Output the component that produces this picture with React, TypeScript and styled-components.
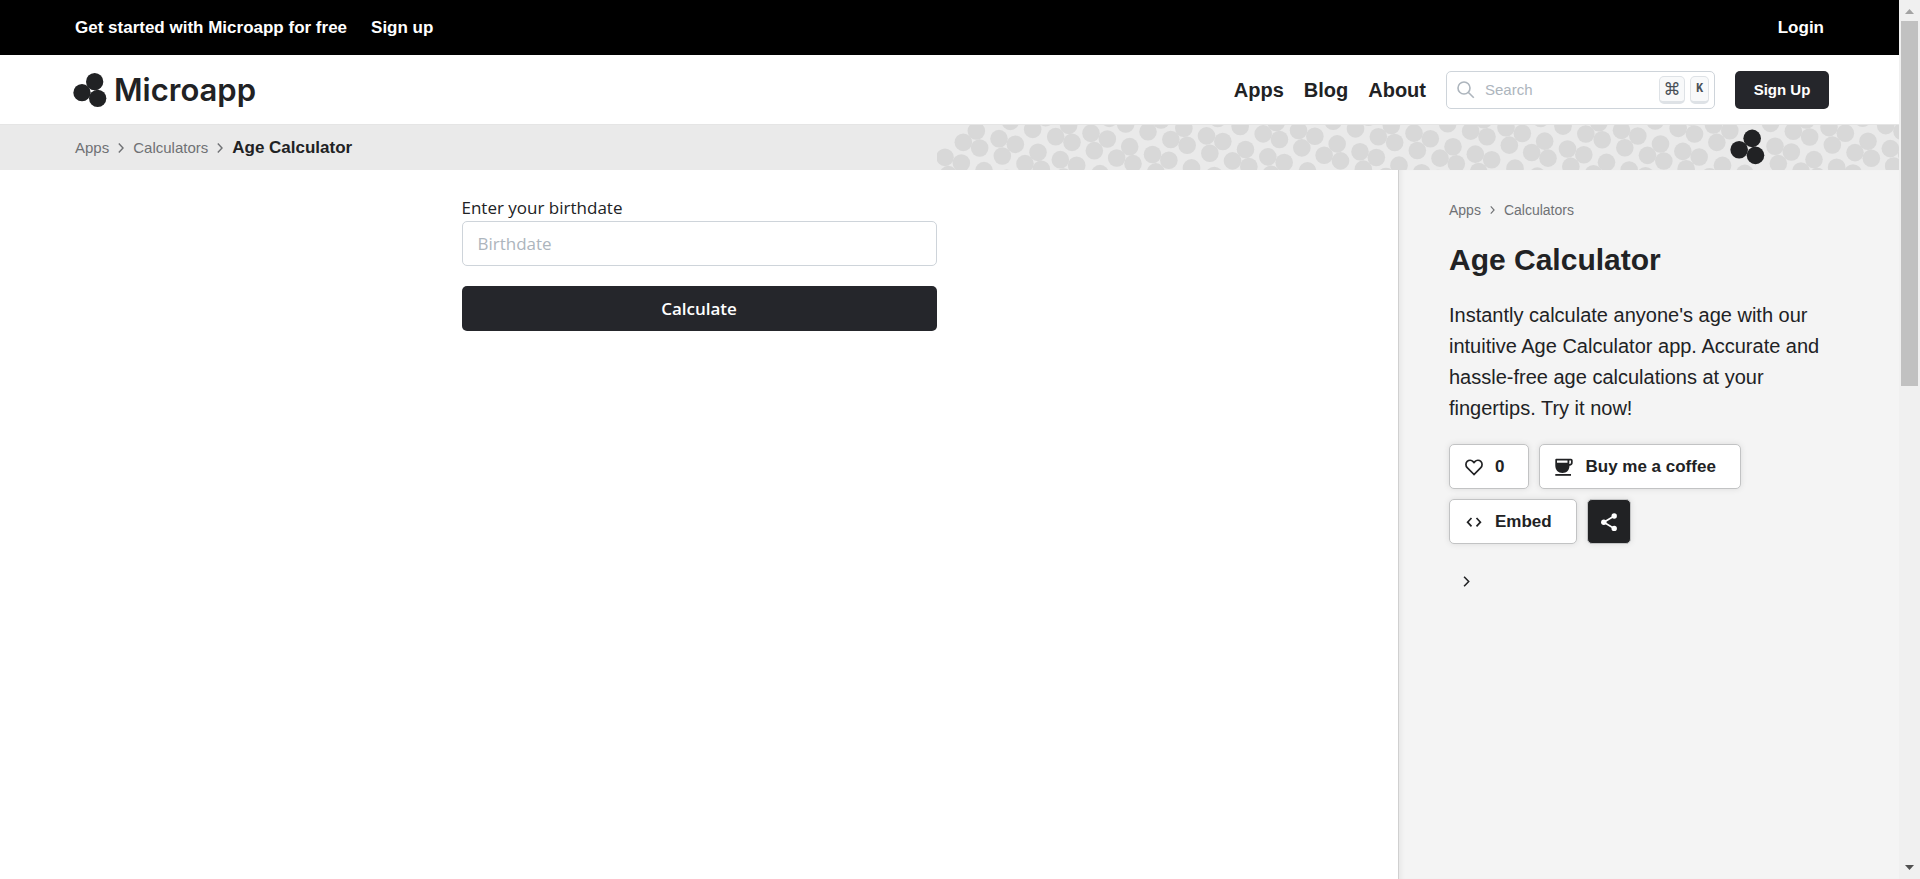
import React from 'react';
import styled, { createGlobalStyle } from 'styled-components';

const sans = '"Liberation Sans", Arial, sans-serif';
const ui = '"Open Sans", "Noto Sans", sans-serif';
const ink = '#212224';
const dark = '#25262b';

const GlobalStyle = createGlobalStyle`
  *, *::before, *::after { box-sizing: border-box; }
  body { margin: 0; background: #fff; color: ${ink}; font-family: ${sans}; }
  a { color: inherit; text-decoration: none; }
  button { font: inherit; cursor: pointer; }
  svg { display: block; flex: none; }
`;

const Shell = styled.div`
  display: grid;
  grid-template-columns: minmax(0, 1fr) 21px;
  height: 100vh;
  overflow: hidden;
`;

const Page = styled.div`
  display: flex;
  flex-direction: column;
  min-height: 0;
`;

const TopBar = styled.div`
  display: flex;
  align-items: center;
  gap: 24px;
  height: 55px;
  padding: 0 75px;
  background: #000;
  color: #fff;
  font-size: 17px;
  font-weight: 700;
`;

const TopLink = styled.a<{ $end?: boolean }>`
  margin-left: ${(p) => (p.$end ? 'auto' : '0')};
`;

const Header = styled.header`
  display: flex;
  align-items: center;
  justify-content: space-between;
  height: 69px;
  padding: 0 70px 0 73px;
`;

const Brand = styled.a`
  display: flex;
  align-items: center;
  gap: 7px;
  font-family: Inter, sans-serif;
  font-size: 31px;
  line-height: 36px;
  font-weight: 600;
`;

const HeaderTools = styled.div`
  display: flex;
  align-items: center;
  gap: 20px;
`;

const Nav = styled.nav`
  display: flex;
  gap: 20px;
  font-size: 20px;
  line-height: 24px;
  font-weight: 700;
`;

const SearchBox = styled.label`
  display: flex;
  align-items: center;
  width: 269px;
  height: 38px;
  padding: 0 5px 0 10px;
  border: 1px solid #ced4da;
  border-radius: 5px;
  color: #adb5bd;
`;

const SearchInput = styled.input`
  flex: 1;
  min-width: 0;
  padding: 0;
  margin-left: 10px;
  border: 0;
  outline: 0;
  background: transparent;
  font-family: ${sans};
  font-size: 15px;
  &::placeholder { color: #adb5bd; opacity: 1; }
`;

const Key = styled.kbd<{ $wide?: boolean }>`
  display: flex;
  align-items: center;
  justify-content: center;
  width: ${(p) => (p.$wide ? 26 : 19)}px;
  height: 28px;
  margin-left: 5px;
  border: 1px solid #dee2e6;
  border-bottom-width: 3px;
  border-radius: 5px;
  background: #f8f9fa;
  color: #495057;
  font-family: ${(p) => (p.$wide ? '"DejaVu Sans"' : '"Liberation Mono"')}, sans-serif;
  font-size: ${(p) => (p.$wide ? 17 : 12)}px;
  font-weight: ${(p) => (p.$wide ? 400 : 700)};
  line-height: 20px;
`;

const SignUp = styled.button`
  width: 94px;
  height: 38px;
  padding: 0;
  border: 0;
  border-radius: 5px;
  background: ${dark};
  color: #fff;
  font-size: 15px;
  font-weight: 700;
`;

const Hero = styled.div`
  display: flex;
  justify-content: space-between;
  height: 46px;
  padding-left: 75px;
  border-top: 1px solid #e5e5e5;
  background: #eaeaea;
`;

const Crumbs = styled.nav<{ $size: number }>`
  display: flex;
  align-items: center;
  gap: 9px;
  color: #6f7174;
  font-size: ${(p) => p.$size}px;
  line-height: 20px;
`;

const CrumbHere = styled.span`
  color: ${ink};
  font-size: 17px;
  font-weight: 700;
`;

const Body = styled.div`
  display: grid;
  grid-template-columns: minmax(0, 1fr) 501px;
  flex: 1;
`;

const Main = styled.main`
  padding: 24px 20px;
`;

const Form = styled.form`
  display: flex;
  flex-direction: column;
  max-width: 475px;
  margin: 0 auto;
  font-family: ${ui};
  font-size: 17px;
`;

const Label = styled.label`
  line-height: 27px;
  font-weight: 500;
`;

const DateInput = styled.input`
  height: 45px;
  padding: 0 15px;
  border: 1px solid #ced4da;
  border-radius: 5px;
  font: inherit;
  &::placeholder { color: #adb5bd; opacity: 1; }
`;

const Submit = styled.button`
  height: 45px;
  margin-top: 20px;
  border: 0;
  border-radius: 5px;
  background: ${dark};
  color: #fff;
  font-weight: 600;
`;

const Sidebar = styled.aside`
  padding: 30px 50px;
  border-left: 1px solid #d0d0d0;
  background: #f4f4f4;
  box-shadow: inset 5px 0 5px -3px rgba(0, 0, 0, 0.06);
`;

const Title = styled.h1`
  margin: 20px 0;
  font-size: 30px;
  line-height: 40px;
`;

const Blurb = styled.p`
  margin: 0 0 20px;
  font-size: 20px;
  line-height: 31px;
`;

const Actions = styled.div`
  display: flex;
  flex-wrap: wrap;
  gap: 10px;
`;

const Action = styled.button<{ $icon?: boolean }>`
  display: flex;
  align-items: center;
  justify-content: ${(p) => (p.$icon ? 'center' : 'flex-start')};
  gap: 11px;
  height: 45px;
  min-width: 44px;
  padding: ${(p) => (p.$icon ? '0' : '0 24px 0 14px')};
  border: 1px solid #c2c3c4;
  border-radius: 5px;
  background: ${(p) => (p.$icon ? ink : '#fff')};
  color: ${(p) => (p.$icon ? '#fff' : ink)};
  box-shadow: 0 0 6px rgba(0, 0, 0, 0.1);
  font-size: 17px;
  font-weight: 700;
`;

const More = styled.button`
  display: flex;
  margin-top: 32px;
  padding: 0 14px;
  border: 0;
  background: none;
  color: ${ink};
`;

const Track = styled.div`
  display: flex;
  flex-direction: column;
  align-items: center;
  justify-content: space-between;
  background: #f0f0f0;
`;

const Thumb = styled.div`
  width: 17px;
  height: 41.5%;
  margin-bottom: auto;
  background: #c1c1c1;
`;

const Chevron = ({ width = 6, height = 10 }: { width?: number; height?: number }) => (
  <svg width={width} height={height} viewBox="0 0 6 10" fill="none" stroke="currentColor" strokeWidth="1.400" aria-hidden="true">
    <path d="M0.800 0.600L5 5L0.800 9.400" />
  </svg>
);

// Circle offsets, from the first circle, of the two cluster orientations.
const LEFT = [[0, 0], [-39, 34], [10, 51]];
const RIGHT = [[0, 0], [49, 17], [10, 52]];
const leftSeeds = [[169, 48], [192, 167], [354, 112], [446, 31], [629, 95], [261, -32], [540, 176], [607, -24]];
const rightSeeds = [[75, 127], [237, 71], [421, 134], [513, 55], [328, -9], [674, -2], [260, 190], [607, 200]];

const Pattern = () => {
  const draw = (seeds: number[][], shape: number[][], name: string) =>
    [0, 1, 2, 3, 4].flatMap((k) =>
      seeds.map(([sx, sy], i) => {
        const black = name === 'l' && k === 3 && i === 4;
        return (
          <g key={`${name}${k}-${i}`} fill={black ? ink : '#d8d8d8'}>
            {shape.map(([dx, dy], j) => (
              <circle key={j} cx={sx + dx + k * 622.5} cy={sy + dy - k * 8.3} r={26.4} />
            ))}
          </g>
        );
      }),
    );
  return (
    <svg width="962" height="45" viewBox="51 30 2886 135" aria-hidden="true">
      {draw(leftSeeds, LEFT, 'l')}
      {draw(rightSeeds, RIGHT, 'r')}
    </svg>
  );
};

export default function App() {
  return (
    <>
      <GlobalStyle />
      <Shell>
        <Page>
          <TopBar>
            <span>Get started with Microapp for free</span>
            <TopLink href="#signup">Sign up</TopLink>
            <TopLink href="#login" $end>Login</TopLink>
          </TopBar>
          <Header>
            <Brand href="#home">
              <svg width="34" height="34" viewBox="0 0 100 102" fill="currentColor" aria-hidden="true">
                <circle cx="64" cy="26" r="26" />
                <circle cx="26" cy="59" r="26" />
                <circle cx="73" cy="76" r="26" />
              </svg>
              Microapp
            </Brand>
            <HeaderTools>
              <Nav>
                <a href="#apps">Apps</a>
                <a href="#blog">Blog</a>
                <a href="#about">About</a>
              </Nav>
              <SearchBox>
                <svg width="18" height="18" viewBox="0 0 18 18" fill="none" stroke="currentColor" strokeWidth="1.600" aria-hidden="true">
                  <circle cx="7" cy="7" r="6" />
                  <path d="M11.200 11.200L16.800 16.800" />
                </svg>
                <SearchInput type="text" placeholder="Search" aria-label="Search" />
                <Key $wide>⌘</Key>
                <Key>K</Key>
              </SearchBox>
              <SignUp type="button">Sign Up</SignUp>
            </HeaderTools>
          </Header>
          <Hero>
            <Crumbs $size={15} aria-label="Breadcrumb">
              <a href="#apps">Apps</a>
              <Chevron />
              <a href="#calculators">Calculators</a>
              <Chevron />
              <CrumbHere>Age Calculator</CrumbHere>
            </Crumbs>
            <Pattern />
          </Hero>
          <Body>
            <Main>
              <Form onSubmit={(e) => e.preventDefault()}>
                <Label htmlFor="birthdate">Enter your birthdate</Label>
                <DateInput id="birthdate" type="text" placeholder="Birthdate" />
                <Submit type="submit">Calculate</Submit>
              </Form>
            </Main>
            <Sidebar>
              <Crumbs $size={14} aria-label="Category">
                <a href="#apps">Apps</a>
                <Chevron width={5} height={8} />
                <a href="#calculators">Calculators</a>
              </Crumbs>
              <Title>Age Calculator</Title>
              <Blurb>
                Instantly calculate anyone's age with our intuitive Age Calculator app. Accurate and hassle-free age
                calculations at your fingertips. Try it now!
              </Blurb>
              <Actions>
                <Action type="button" aria-label="Like">
                  <svg width="20" height="20" viewBox="0 0 20 20" fill="none" stroke="currentColor" strokeWidth="1.700" aria-hidden="true">
                    <path d="M10 17.500L3.200 10.600C1.500 8.800 1.500 6 3.200 4.400C4.900 2.800 7.500 2.900 9.100 4.600L10 5.600L10.900 4.600C12.500 2.900 15.100 2.800 16.800 4.400C18.500 6 18.500 8.800 16.800 10.600Z" />
                  </svg>
                  0
                </Action>
                <Action type="button">
                  <svg width="20" height="20" viewBox="0 0 20 20" fill="currentColor" aria-hidden="true">
                    <path
                      fillRule="evenodd"
                      d="M2.300 1.700H17Q18.700 1.700 18.700 3.500V5.800Q18.700 8.500 15.500 8.700C15.200 13.500 12.500 15.900 8.600 15.900C4 15.900 1.300 13 1.300 8.500V2.700Q1.300 1.700 2.300 1.700ZM3 3.400V5.800H13.500V3.400ZM15.300 3.400V7Q17 7 17 5.500V3.400Z"
                    />
                    <path d="M1.300 17H17V18.800H1.300Z" />
                  </svg>
                  Buy me a coffee
                </Action>
                <Action type="button">
                  <svg width="20" height="20" viewBox="0 0 20 20" fill="none" stroke="currentColor" strokeWidth="1.700" aria-hidden="true">
                    <path d="M7.500 6L3.600 10.200L7.500 14.400M12.500 6L16.400 10.200L12.500 14.400" />
                  </svg>
                  Embed
                </Action>
                <Action type="button" $icon aria-label="Share">
                  <svg width="20" height="20" viewBox="0 0 20 20" fill="currentColor" aria-hidden="true">
                    <path d="M15.200 4L4.800 10.200L15.200 16.400" fill="none" stroke="currentColor" strokeWidth="1.700" />
                    <circle cx="15.200" cy="4" r="2.700" />
                    <circle cx="4.800" cy="10.200" r="2.700" />
                    <circle cx="15.200" cy="16.400" r="2.700" />
                  </svg>
                </Action>
              </Actions>
              <More type="button" aria-label="Show more">
                <Chevron width={7} height={11} />
              </More>
            </Sidebar>
          </Body>
        </Page>
        <Track aria-hidden="true">
          <svg width="21" height="21" viewBox="0 0 21 21"><path d="M6 14L10.500 9L15 14Z" fill="#a3a3a3" /></svg>
          <Thumb />
          <svg width="21" height="21" viewBox="0 0 21 21"><path d="M6 7L10.500 12L15 7Z" fill="#505050" /></svg>
        </Track>
      </Shell>
    </>
  );
}
